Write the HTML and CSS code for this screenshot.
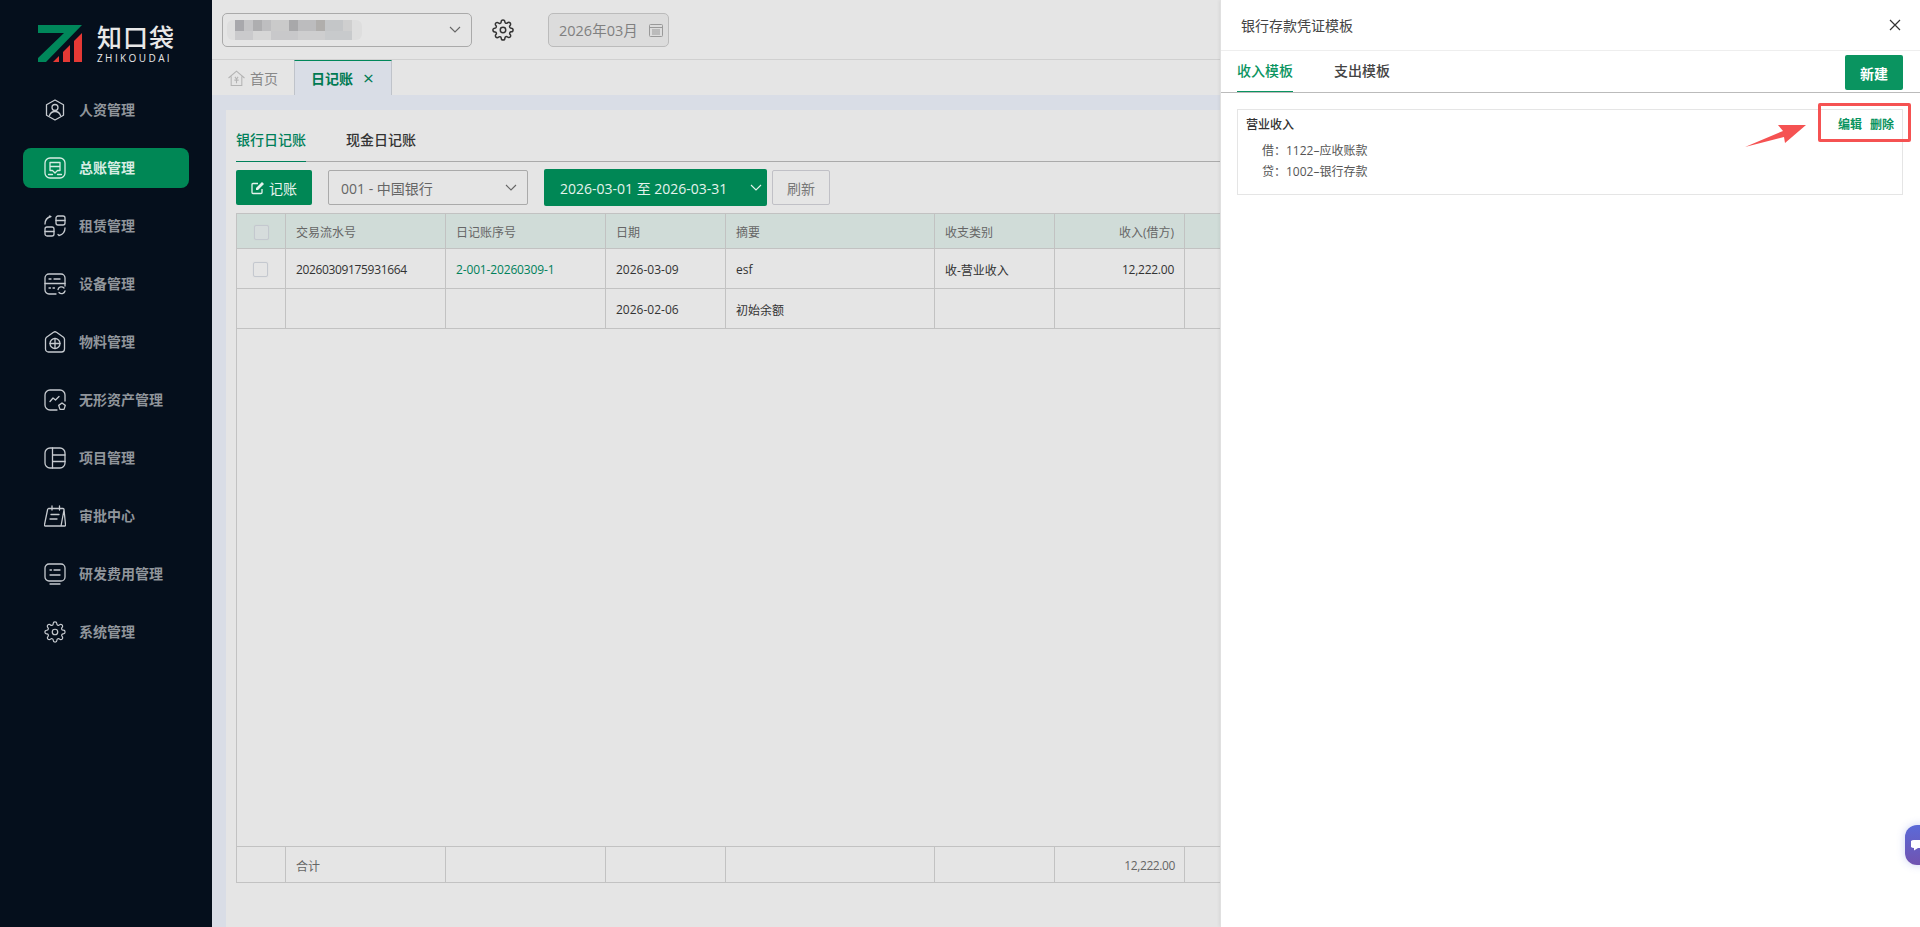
FILE: index.html
```html
<!DOCTYPE html>
<html>
<head>
    <meta charset="utf-8">
    <title>日记账</title>
    <link rel="stylesheet" href="styles.css">
</head>
<body>
<div class="app">
    <!-- 侧边栏 -->
    <aside class="sidebar">
        <div class="logo">
            <svg class="logo-mark" viewBox="0 0 44 37">
                <polygon fill="#00875a" points="0,0 44,0 8,37 0,37 0,33 26,8 0,8"/>
                <polygon fill="#e53935" points="15,37 21,31 21,37"/>
                <polygon fill="#e53935" points="25,37 25,27 32,20 32,37"/>
                <polygon fill="#e53935" points="36,37 36,16 44,8 44,37"/>
            </svg>
            <div class="logo-text">
                <div class="logo-cn">知口袋</div>
                <div class="logo-en">ZHIKOUDAI</div>
            </div>
        </div>
        <nav class="nav">
            <a class="nav-item">
                <svg class="nav-icon" viewBox="0 0 22 22"><path d="M11 1l8.500 4.800v10.400L11 21l-8.500-4.800V5.800z"/><circle cx="11" cy="8.500" r="3"/><path d="M5.500 16.500c1-3 3-4 5.500-4s4.500 1 5.500 4"/></svg>
                人资管理
            </a>
            <a class="nav-item active">
                <svg class="nav-icon" viewBox="0 0 22 22"><rect x="1" y="1" width="20" height="20" rx="5"/><path d="M6 5.500h10v8h-2.500L11 16l-2.500-2.500H6zM6 9.500h10"/><path d="M4.500 17.500h4M13.500 17.500h4"/></svg>
                总账管理
            </a>
            <a class="nav-item">
                <svg class="nav-icon" viewBox="0 0 22 22"><rect x="12" y="1" width="9" height="9" rx="2"/><path d="M12 5.500h9"/><rect x="1" y="12" width="9" height="9" rx="2"/><path d="M1 16.500h9"/><path d="M1 9c0-3.500 2-6.500 6-7.500l-1.500-.5M21 13c0 3.500-2 6.500-6 7.500l-1-1"/></svg>
                租赁管理
            </a>
            <a class="nav-item">
                <svg class="nav-icon" viewBox="0 0 22 22"><path d="M12 21H5a4 4 0 0 1-4-4V5a4 4 0 0 1 4-4h12a4 4 0 0 1 4 4v8"/><path d="M1 10.500h20M5 6h2M10 6h6M5 15h1.500M9 15h1.500"/><path d="M14 16.500a3.500 3.500 0 0 1 6-1.500M21 18a3.500 3.500 0 0 1-6 1.500"/></svg>
                设备管理
            </a>
            <a class="nav-item">
                <svg class="nav-icon" viewBox="0 0 22 22"><path d="M1.500 8.500c0-1 .4-1.700 1-2.200l7-5a2.500 2.500 0 0 1 3 0l7 5c.6.500 1 1.200 1 2.200V18a3 3 0 0 1-3 3h-13a3 3 0 0 1-3-3z"/><circle cx="11" cy="12.500" r="5"/><path d="M6 12.500h10M11 7.500v10"/></svg>
                物料管理
            </a>
            <a class="nav-item">
                <svg class="nav-icon" viewBox="0 0 22 22"><path d="M13 21H6a5 5 0 0 1-5-5V6a5 5 0 0 1 5-5h10a5 5 0 0 1 5 5v6"/><path d="M6 12.500l3-3.500 2.500 2L15 7.500"/><path d="M18 14l3.300 2.400-1.300 4h-4l-1.300-4z"/></svg>
                无形资产管理
            </a>
            <a class="nav-item">
                <svg class="nav-icon" viewBox="0 0 22 22"><rect x="1" y="1" width="20" height="20" rx="5"/><path d="M8.500 1v20M8.500 8h12.500M8.500 14.500h12.500"/></svg>
                项目管理
            </a>
            <a class="nav-item">
                <svg class="nav-icon" viewBox="0 0 22 22"><path d="M4.500 3.500h14.500a1 1 0 0 1 1 1l1.500 15a1 1 0 0 1-1 1.500H1.500a1 1 0 0 1-1-1.500L3.500 5a1.500 1.500 0 0 1 1-1.500zM20 5l-3 16"/><path d="M8 1v4M15.500 1v4M7 9.500h8M6 14h7"/></svg>
                审批中心
            </a>
            <a class="nav-item">
                <svg class="nav-icon" viewBox="0 0 22 22"><rect x="1" y="1" width="20" height="17" rx="4"/><path d="M6 7h1.500M10 7h6M6 12h10M6 21h10"/></svg>
                研发费用管理
            </a>
            <a class="nav-item">
                <svg class="nav-icon" viewBox="0 0 24 24"><circle cx="12" cy="12" r="3"/><path d="M19.400 15a1.650 1.650 0 0 0 .33 1.820l.06.06a2 2 0 0 1 0 2.830 2 2 0 0 1-2.830 0l-.06-.06a1.650 1.650 0 0 0-1.820-.33 1.650 1.650 0 0 0-1 1.510V21a2 2 0 0 1-2 2 2 2 0 0 1-2-2v-.09A1.650 1.650 0 0 0 9 19.400a1.650 1.650 0 0 0-1.820.33l-.06.06a2 2 0 0 1-2.830 0 2 2 0 0 1 0-2.830l.06-.06a1.650 1.650 0 0 0 .33-1.820 1.650 1.650 0 0 0-1.510-1H3a2 2 0 0 1-2-2 2 2 0 0 1 2-2h.09A1.650 1.650 0 0 0 4.600 9a1.650 1.650 0 0 0-.33-1.820l-.06-.06a2 2 0 0 1 0-2.830 2 2 0 0 1 2.830 0l.06.06a1.650 1.650 0 0 0 1.820.33H9a1.650 1.650 0 0 0 1-1.510V3a2 2 0 0 1 2-2 2 2 0 0 1 2 2v.09a1.650 1.650 0 0 0 1 1.510 1.650 1.650 0 0 0 1.820-.33l.06-.06a2 2 0 0 1 2.830 0 2 2 0 0 1 0 2.830l-.06.06a1.650 1.650 0 0 0-.33 1.820V9a1.650 1.650 0 0 0 1.510 1H21a2 2 0 0 1 2 2 2 2 0 0 1-2 2h-.09a1.650 1.650 0 0 0-1.510 1z"/></svg>
                系统管理
            </a>
        </nav>
    </aside>

    <main class="main">
        <!-- 顶部 -->
        <header class="topbar">
            <div class="company-select">
                <div class="blurred"></div>
                <svg class="chevron" viewBox="0 0 12 7"><path d="M1 1l5 5 5-5"/></svg>
            </div>
            <svg class="gear" viewBox="0 0 24 24"><circle cx="12" cy="12" r="3"/><path d="M19.400 15a1.650 1.650 0 0 0 .33 1.820l.06.06a2 2 0 0 1 0 2.830 2 2 0 0 1-2.830 0l-.06-.06a1.650 1.650 0 0 0-1.820-.33 1.650 1.650 0 0 0-1 1.510V21a2 2 0 0 1-2 2 2 2 0 0 1-2-2v-.09A1.650 1.650 0 0 0 9 19.400a1.650 1.650 0 0 0-1.820.33l-.06.06a2 2 0 0 1-2.830 0 2 2 0 0 1 0-2.830l.06-.06a1.650 1.650 0 0 0 .33-1.820 1.650 1.650 0 0 0-1.510-1H3a2 2 0 0 1-2-2 2 2 0 0 1 2-2h.09A1.650 1.650 0 0 0 4.600 9a1.650 1.650 0 0 0-.33-1.820l-.06-.06a2 2 0 0 1 0-2.830 2 2 0 0 1 2.830 0l.06.06a1.650 1.650 0 0 0 1.820.33H9a1.650 1.650 0 0 0 1-1.510V3a2 2 0 0 1 2-2 2 2 0 0 1 2 2v.09a1.650 1.650 0 0 0 1 1.510 1.650 1.650 0 0 0 1.820-.33l.06-.06a2 2 0 0 1 2.830 0 2 2 0 0 1 0 2.830l-.06.06a1.650 1.650 0 0 0-.33 1.820V9a1.650 1.650 0 0 0 1.510 1H21a2 2 0 0 1 2 2 2 2 0 0 1-2 2h-.09a1.650 1.650 0 0 0-1.510 1z"/></svg>
            <div class="month-box">
                <span>2026年03月</span>
                <svg class="cal" viewBox="0 0 14 14"><rect x="0.500" y="1.500" width="13" height="12" rx="1"/><path d="M0.500 4.500h13M3 7h8M3 9h8M3 11h8"/></svg>
            </div>
        </header>

        <!-- 页签 -->
        <div class="page-tabs">
            <a class="page-tab">
                <svg class="home" viewBox="0 0 16 15"><path d="M0.500 7.500L8 1l7.500 6.500M3 6v8.500h10V6"/><path d="M6.500 6.500L8 8.500l1.500-2M6 9.500h4M8 8.500v4"/></svg>
                首页
            </a>
            <a class="page-tab current">日记账<span class="tab-x">×</span></a>
        </div>

        <div class="workarea">
            <div class="panel">
                <div class="sub-tabs">
                    <a class="sub-tab active">银行日记账</a>
                    <a class="sub-tab">现金日记账</a>
                </div>

                <div class="toolbar">
                    <button class="btn-green btn-post">
                        <svg viewBox="0 0 14 14"><path d="M11 8v3.500a1 1 0 0 1-1 1H2a1 1 0 0 1-1-1V3.500a1 1 0 0 1 1-1h5"/><path class="solid" d="M5 7l6-6 2 2-6 6H5z"/></svg>
                        记账
                    </button>
                    <div class="bank-select">
                        <span>001 - 中国银行</span>
                        <svg class="chevron" viewBox="0 0 12 7"><path d="M1 1l5 5 5-5"/></svg>
                    </div>
                    <div class="btn-green date-range">
                        <span>2026-03-01 至 2026-03-31</span>
                        <svg class="chevron" viewBox="0 0 12 7"><path d="M1 1l5 5 5-5"/></svg>
                    </div>
                    <button class="btn-plain">刷新</button>
                </div>

                <table class="ledger">
                    <colgroup>
                        <col class="c-check"><col class="c-serial"><col class="c-serial">
                        <col class="c-date"><col class="c-memo"><col class="c-type"><col class="c-amount">
                        <col>
                    </colgroup>
                    <thead>
                        <tr>
                            <th class="center"><span class="checkbox head"></span></th>
                            <th>交易流水号</th>
                            <th>日记账序号</th>
                            <th>日期</th>
                            <th>摘要</th>
                            <th>收支类别</th>
                            <th class="right">收入(借方)</th>
                            <th></th>
                        </tr>
                    </thead>
                    <tbody>
                        <tr class="row">
                            <td class="center"><span class="checkbox in-row"></span></td>
                            <td class="serial">20260309175931664</td>
                            <td class="link">2-001-20260309-1</td>
                            <td>2026-03-09</td>
                            <td>esf</td>
                            <td>收-营业收入</td>
                            <td class="right money">12,222.00</td>
                            <td></td>
                        </tr>
                        <tr class="row">
                            <td></td>
                            <td></td>
                            <td></td>
                            <td>2026-02-06</td>
                            <td>初始余额</td>
                            <td></td>
                            <td></td>
                            <td></td>
                        </tr>
                        <tr class="filler"><td colspan="8"></td></tr>
                        <tr class="total">
                            <td></td>
                            <td>合计</td>
                            <td></td>
                            <td></td>
                            <td></td>
                            <td></td>
                            <td class="right sum">12,222.00</td>
                            <td></td>
                        </tr>
                    </tbody>
                </table>
            </div>
        </div>
    </main>
</div>

<!-- 右侧抽屉 -->
<section class="drawer">
    <div class="drawer-head">
        <span>银行存款凭证模板</span>
        <svg class="drawer-close" viewBox="0 0 12 12"><path d="M1 1l10 10M11 1L1 11"/></svg>
    </div>
    <div class="drawer-tabs">
        <a class="drawer-tab active">收入模板</a>
        <a class="drawer-tab">支出模板</a>
        <button class="btn-new">新建</button>
    </div>
    <div class="drawer-body">
        <div class="tpl-card">
            <div class="tpl-top">
                <span class="tpl-name">营业收入</span>
                <span class="tpl-actions"><a>编辑</a><a>删除</a></span>
            </div>
            <div class="tpl-line">借：1122–应收账款</div>
            <div class="tpl-line">贷：1002–银行存款</div>
        </div>
    </div>
</section>

<!-- 标注 -->
<div class="mark-box"></div>
<svg class="mark-arrow" viewBox="0 0 64 26"><polygon points="0,24 38,8 33,2 61,2 40,20 39,14"/></svg>

<div class="chat-bubble">
    <svg viewBox="0 0 16 12"><path d="M3 1h10a3 3 0 0 1 0 8H7l-4 2.500V9a3 3 0 0 1 0-8z"/></svg>
</div>
</body>
</html>
```

FILE: styles.css
```css
* {
    box-sizing: border-box;
}

html, body {
    height: 100%;
}

body {
    margin: 0;
    overflow: hidden;
    background: #e5e5e5;
    font-family: "Open Sans", "Noto Sans CJK SC", sans-serif;
    font-size: 12px;
    color: #333;
}

a {
    text-decoration: none;
}

button {
    font-family: inherit;
}

svg {
    display: block;
    flex: none;
}

.app {
    display: flex;
    height: 100vh;
}

/* 侧边栏 */
.sidebar {
    width: 212px;
    flex: none;
    background: #050f1c;
}

.logo {
    display: flex;
    gap: 15px;
    height: 90px;
    padding: 25px 0 0 38px;
}

.logo-mark {
    width: 44px;
    height: 37px;
}

.logo-text {
    color: #e8e8e8;
}

.logo-cn {
    font-size: 25px;
    font-weight: 500;
    line-height: 24px;
    letter-spacing: 1px;
}

.logo-en {
    margin-top: 4px;
    font-size: 10px;
    line-height: 11px;
    letter-spacing: 2.400px;
}

.nav {
    display: flex;
    flex-direction: column;
    gap: 18px;
    padding: 0 23px;
}

.nav-item {
    display: flex;
    align-items: center;
    gap: 13px;
    height: 40px;
    padding: 0 0 2px 21px;
    border-radius: 8px;
    font-size: 14px;
    font-weight: 700;
    color: #90959b;
}

.nav-item.active {
    background: #008755;
    color: #d8ede4;
}

.nav-icon {
    width: 22px;
    height: 22px;
    margin-top: 2px;
    fill: none;
    stroke: #c6cacf;
    stroke-width: 1.300;
    stroke-linecap: round;
    stroke-linejoin: round;
}

.active .nav-icon {
    stroke: #d8ede4;
}

/* 顶部 */
.main {
    flex: 1;
    min-width: 0;
    display: flex;
    flex-direction: column;
}

.topbar {
    display: flex;
    align-items: center;
    height: 60px;
    padding: 0 0 0 10px;
    border-bottom: 1px solid #d0d0d0;
}

.chevron {
    width: 12px;
    height: 7px;
    fill: none;
    stroke: #666;
    stroke-width: 1.100;
}

.company-select {
    display: flex;
    align-items: center;
    justify-content: space-between;
    width: 250px;
    height: 34px;
    padding: 0 10px 0 4px;
    border: 1px solid #aaa;
    border-radius: 5px;
}

/* 打码的公司名 */
.blurred {
    width: 135px;
    height: 20px;
    border-radius: 6px;
    background:
        linear-gradient(90deg, #dedede 8px, #a8a8ac 8px 17px, #c4c4c6 17px 26px, #aeaeb0 26px 35px, #bebec0 35px 44px, #cacaca 44px 62px, #a8a8aa 62px 71px, #bcbcbe 71px 89px, #b0aeac 89px 98px, #c4c6c8 98px 116px, #cfcfcf 116px 125px, #dedede 125px) top / 100% 11px no-repeat,
        linear-gradient(90deg, #dedede 8px, #cacacc 8px 26px, #d6d6d6 26px 44px, #c8c8ca 44px 71px, #cececf 71px 98px, #c8cacc 98px 125px, #dedede 125px) bottom / 100% 9px no-repeat;
    filter: blur(0.7px);
}

.gear {
    width: 22px;
    height: 22px;
    margin-left: 20px;
    fill: none;
    stroke: #333;
    stroke-width: 1.600;
}

.month-box {
    display: flex;
    align-items: center;
    gap: 11px;
    width: 121px;
    height: 34px;
    margin-left: 34px;
    padding-left: 10px;
    border: 1px solid #bbb;
    border-radius: 5px;
    background: #dcdcdc;
    font-size: 14.500px;
    color: #808080;
}

.cal {
    width: 14px;
    height: 14px;
    fill: none;
    stroke: #999;
}

/* 页签 */
.page-tabs {
    display: flex;
    height: 35px;
}

.page-tab {
    display: flex;
    align-items: center;
    gap: 5px;
    padding-left: 16px;
    width: 82px;
    font-size: 14px;
    color: #888;
}

.home {
    width: 17px;
    height: 16px;
    fill: none;
    stroke: #b4b4b4;
}

.page-tab.current {
    width: 98px;
    gap: 10px;
    padding-left: 16px;
    background: #d9dde6;
    border: 1px solid #bfc3ca;
    border-top: 1px solid #00875a;
    border-bottom: 0;
    font-weight: 700;
    color: #007a52;
}

.tab-x {
    font-size: 19px;
    font-weight: 400;
    line-height: 1;
}

.workarea {
    flex: 1;
    min-height: 0;
    padding: 15px 0 0 14px;
    background: #d9dde6;
}

.panel {
    height: 100%;
    padding: 0 10px;
    background: #e5e5e5;
}

.sub-tabs {
    display: flex;
    gap: 40px;
    height: 52px;
    padding-top: 20px;
    border-bottom: 1px solid #aaa;
}

.sub-tab {
    height: 32px;
    font-size: 14px;
    line-height: 20px;
    font-weight: 500;
    color: #333;
}

.sub-tab.active {
    color: #00805a;
    border-bottom: 1px solid #00805a;
}

.toolbar {
    display: flex;
    align-items: center;
    height: 37px;
    margin-top: 7px;
}

.btn-green {
    background: #008755;
    border: 0;
    border-radius: 2px;
    color: #e5f3ed;
}

.btn-post {
    display: flex;
    align-items: center;
    justify-content: center;
    gap: 4px;
    width: 76px;
    height: 35px;
    font-size: 14px;
}

.btn-post svg {
    width: 14px;
    height: 14px;
    fill: none;
    stroke: #e5f3ed;
    stroke-width: 1.300;
}

.btn-post .solid {
    fill: #e5f3ed;
    stroke: none;
}

.bank-select {
    display: flex;
    align-items: center;
    justify-content: space-between;
    width: 200px;
    height: 35px;
    margin-left: 16px;
    padding: 0 10px 0 12px;
    border: 1px solid #aaa;
    border-radius: 2px;
    font-size: 14px;
    color: #666;
}

.date-range {
    display: flex;
    align-items: center;
    justify-content: space-between;
    width: 223px;
    height: 37px;
    margin-left: 16px;
    padding: 0 5px 0 16px;
    font-size: 14px;
}

.date-range .chevron {
    stroke: #e5f3ed;
}

.btn-plain {
    width: 58px;
    height: 35px;
    margin-left: 5px;
    background: none;
    border: 1px solid #c0c0c6;
    border-radius: 2px;
    font-size: 14px;
    color: #777;
}

/* 表格 */
.ledger {
    width: 100%;
    margin-top: 7px;
    table-layout: fixed;
    border-collapse: collapse;
    border: 1px solid #c2c2c2;
}

.c-check { width: 49px; }
.c-serial { width: 160px; }
.c-date { width: 120px; }
.c-memo { width: 209px; }
.c-type { width: 120px; }
.c-amount { width: 130px; }

.ledger th,
.ledger td {
    padding: 2px 10px 0;
    border: 1px solid #c2c2c2;
    font-size: 12px;
    text-align: left;
    white-space: nowrap;
}

.ledger th {
    height: 35px;
    background: #d0dcd8;
    font-weight: 400;
    color: #666;
}

.ledger .center {
    padding: 0;
    text-align: center;
}

.ledger .right {
    padding-right: 10px;
    text-align: right;
}

.row td {
    height: 40px;
    color: #333;
}

.ledger td.serial {
    letter-spacing: -0.350px;
}

.ledger td.link {
    color: #00805a;
    letter-spacing: -0.150px;
}

.ledger td.money {
    letter-spacing: -0.250px;
}

.filler td {
    height: 518px;
}

.total td {
    height: 36px;
    color: #666;
}

.ledger td.sum {
    padding-right: 9px;
    letter-spacing: -0.400px;
}

.checkbox {
    display: inline-block;
    width: 15px;
    height: 15px;
    vertical-align: middle;
    border: 1px solid #c4c8cf;
    border-radius: 2px;
    box-shadow: 0 0 1px #ccc;
}

.checkbox.head {
    background: #d6dcdc;
}

.checkbox.in-row {
    margin-right: 2px;
}

/* 抽屉 */
.drawer {
    position: absolute;
    top: 0;
    right: 0;
    bottom: 0;
    width: 700px;
    display: flex;
    flex-direction: column;
    background: #fff;
    border-left: 1px solid #e0e0e0;
    box-shadow: -1px 0 3px rgba(0, 0, 0, 0.06);
}

.drawer-head {
    display: flex;
    align-items: center;
    justify-content: space-between;
    height: 51px;
    padding: 0 19px 0 20px;
    border-bottom: 1px solid #eee;
    font-size: 14px;
    color: #444;
}

.drawer-close {
    width: 12px;
    height: 12px;
    fill: none;
    stroke: #333;
    stroke-width: 1.200;
}

.drawer-tabs {
    display: flex;
    align-items: flex-start;
    gap: 41px;
    height: 42px;
    padding: 0 17px 0 16px;
    border-bottom: 1px solid #bbb;
}

.drawer-tab {
    height: 41px;
    padding-top: 10px;
    font-size: 14px;
    line-height: 20px;
    font-weight: 500;
    color: #444;
}

.drawer-tab.active {
    color: #0a9460;
    border-bottom: 1px solid #0a9460;
}

.btn-new {
    width: 58px;
    height: 35px;
    margin: 4px 0 0 auto;
    background: #0a9460;
    border: 0;
    border-radius: 2px;
    font-size: 14px;
    font-weight: 700;
    color: #fff;
}

.drawer-body {
    padding: 16px 17px 0 16px;
}

.tpl-card {
    height: 86px;
    padding: 5px 8px;
    border: 1px solid #e5e5e5;
}

.tpl-top {
    display: flex;
    justify-content: space-between;
    height: 25px;
    line-height: 20px;
}

.tpl-name {
    font-weight: 500;
    color: #333;
}

.tpl-actions {
    display: flex;
    gap: 8px;
    font-weight: 700;
    color: #0a9460;
}

.tpl-line {
    padding-left: 16px;
    line-height: 21px;
    color: #555;
}

/* 标注 */
.mark-box {
    position: absolute;
    left: 1818px;
    top: 103px;
    width: 93px;
    height: 39px;
    border: 3px solid #f55252;
    border-radius: 2px;
}

.mark-arrow {
    position: absolute;
    left: 1745px;
    top: 123px;
    width: 64px;
    height: 26px;
    fill: #f55252;
}

.chat-bubble {
    position: absolute;
    left: 1905px;
    top: 825px;
    width: 30px;
    height: 40px;
    padding: 14px 0 0 6px;
    border-radius: 12px;
    background: linear-gradient(180deg, #5b6ad8, #7153b0);
    box-shadow: 0 0 8px rgba(91, 106, 216, 0.3);
}

.chat-bubble svg {
    width: 16px;
    height: 12px;
    fill: #fff;
}
```
